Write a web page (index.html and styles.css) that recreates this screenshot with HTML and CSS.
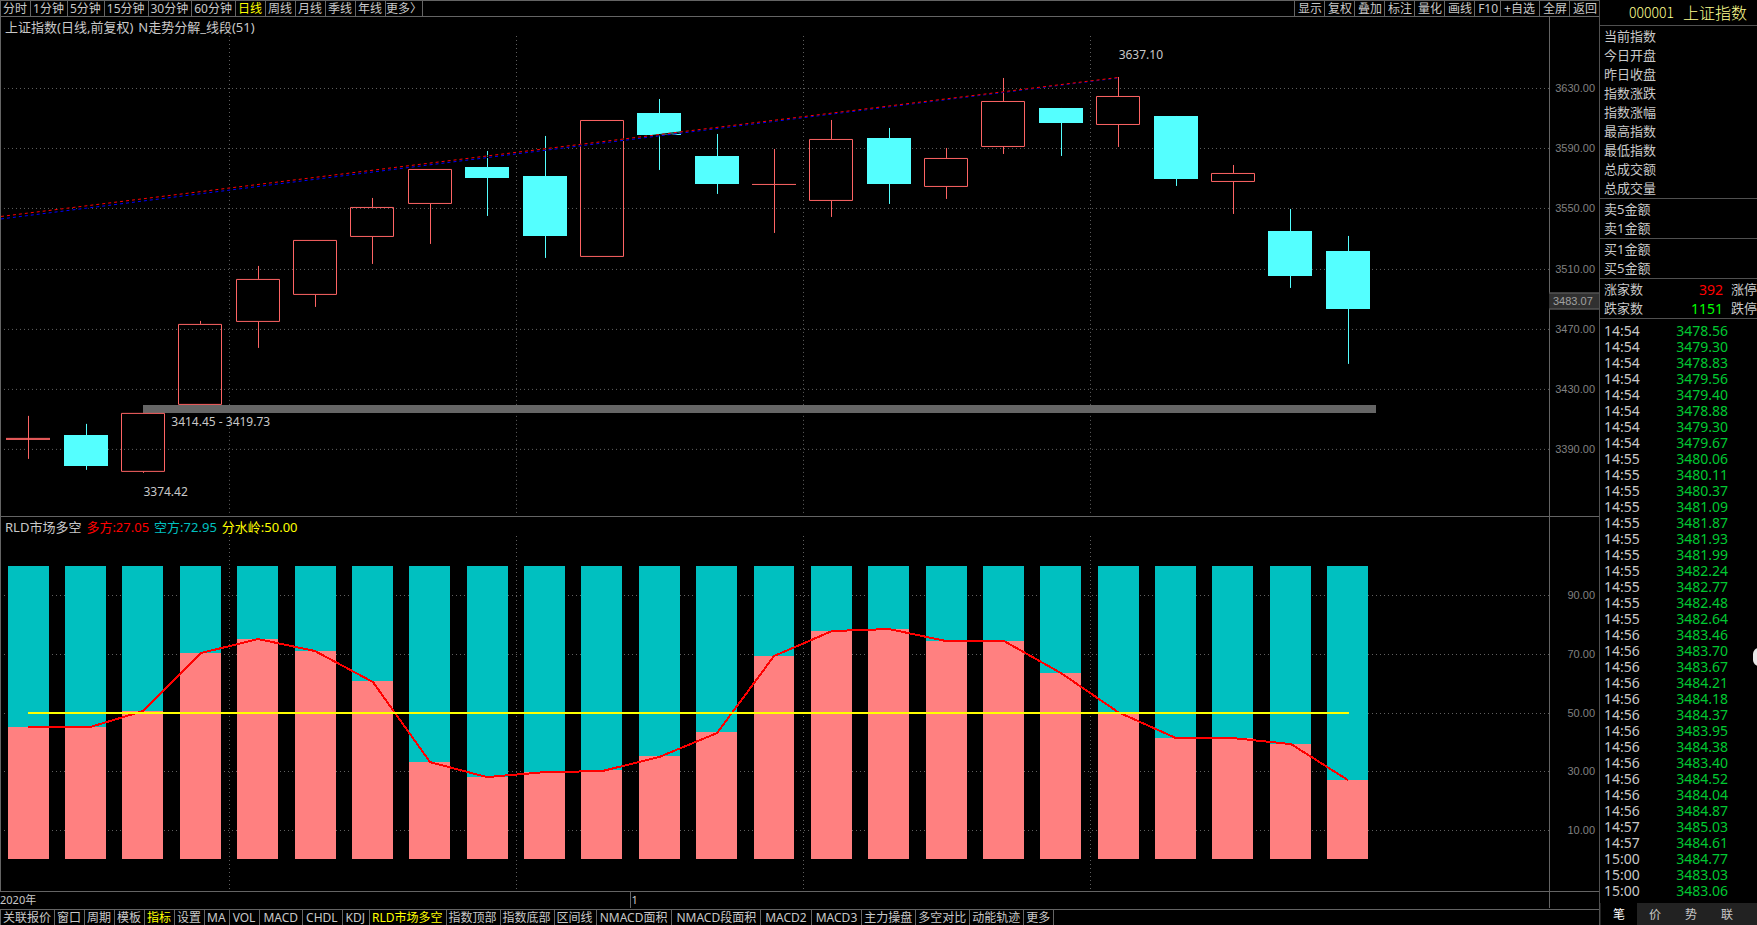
FILE: index.html
```html
<!DOCTYPE html>
<html lang="zh-CN">
<head>
<meta charset="utf-8">
<title>上证指数 000001</title>
<link rel="stylesheet" href="styles.css">
</head>
<body>
<div class="terminal">
  <main class="workspace">
    <nav class="toolbar toolbar-top">
      <div class="cells">
        <button>分时</button><button>1分钟</button><button>5分钟</button><button>15分钟</button><button>30分钟</button><button>60分钟</button><button class="active">日线</button><button>周线</button><button>月线</button><button>季线</button><button>年线</button><button class="flush">更多〉</button>
      </div>
      <div class="cells cells-right">
        <button>显示</button><button>复权</button><button>叠加</button><button>标注</button><button>量化</button><button>画线</button><button>F10</button><button class="latin">+自选</button><button>全屏</button><button>返回</button>
      </div>
    </nav>

    <section class="panel panel-price">
      <div class="plot">
        <svg viewBox="1 17 1548 499" preserveAspectRatio="none" aria-hidden="true">
          <g class="grid">
            <path d="M4 88.5H1549M4 148.5H1549M4 208.5H1549M4 269.5H1549M4 329.5H1549M4 389.5H1549M4 449.5H1549"/>
            <path d="M229.5 36V514M516.5 36V514M803.5 36V514M1090.5 36V514"/>
          </g>
          <rect class="band" x="143" y="405" width="1233" height="8"/>
          <path class="up" d="M28.5 416V459M143.5 472V473M200.5 321V324M258.5 266V279M258.5 322V348M315.5 295V307M372.5 198V207M372.5 237V264M430.5 204V244M774.5 149V233M831.5 120V139M831.5 201V217M946.5 148V158M946.5 187V199M1003.5 78V101M1003.5 147V154M1118.5 77V96M1118.5 125V147M1233.5 165V173M1233.5 182V214"/>
          <path class="up" d="M6 438.5H50M6 439.5H50M752 184.5H796"/>
          <path class="up" d="M121.5 413.5h43v58h-43zM178.5 324.5h43v80h-43zM236.5 279.5h43v42h-43zM293.5 240.5h43v54h-43zM350.5 207.5h43v29h-43zM408.5 169.5h43v34h-43zM580.5 120.5h43v136h-43zM809.5 139.5h43v61h-43zM924.5 158.5h43v28h-43zM981.5 101.5h43v45h-43zM1096.5 96.5h43v28h-43zM1211.5 173.5h43v8h-43z"/>
          <path class="down-wick" d="M86.5 424V470M487.5 151V216M545.5 136V258M659.5 99V170M717.5 134V194M889.5 128V204M1061.5 108V156M1176.5 116V186M1290.5 209V288M1348.5 236V364"/>
          <path class="down" d="M64 435h44v31h-44zM465 167h44v11h-44zM523 176h44v60h-44zM637 113h44v22h-44zM695 156h44v28h-44zM867 138h44v46h-44zM1039 108h44v15h-44zM1154 116h44v63h-44zM1268 231h44v45h-44zM1326 251h44v58h-44z"/>
          <path class="trend-gap" d="M1 219L1118 78"/>
          <path class="trend-blue" d="M1 219L1118 78"/>
          <path class="trend-gap" d="M1 216.5L1118 77.5"/>
          <path class="trend-red" d="M1 216.5L1118 77.5"/>
        </svg>
        <h2 class="caption"><span>上证指数(日线,前复权)</span> <span>N走势分解_线段(51)</span></h2>
        <span class="note" style="left:72.2%;top:7.6%">3637.10</span>
        <span class="note" style="left:11%;top:81.1%">3414.45 - 3419.73</span>
        <span class="note" style="left:9.2%;top:95.2%">3374.42</span>
      </div>
      <div class="axis">
        <span style="top:14.2%">3630.00</span>
        <span style="top:26.3%">3590.00</span>
        <span style="top:38.3%">3550.00</span>
        <span style="top:50.5%">3510.00</span>
        <span class="last-price" style="top:57%">3483.07</span>
        <span style="top:62.5%">3470.00</span>
        <span style="top:74.5%">3430.00</span>
        <span style="top:86.6%">3390.00</span>
      </div>
    </section>

    <section class="panel panel-rld">
      <div class="plot">
        <svg viewBox="1 517 1548 374" preserveAspectRatio="none" aria-hidden="true">
          <g class="grid">
            <path d="M4 595.5H1549M4 654.5H1549M4 713.5H1549M4 771.5H1549M4 830.5H1549"/>
            <path d="M229.5 536V890M516.5 536V890M803.5 536V890M1090.5 536V890"/>
          </g>
          <path class="bear" d="M8 566h41v293h-41zM65 566h41v293h-41zM122 566h41v293h-41zM180 566h41v293h-41zM237 566h41v293h-41zM295 566h41v293h-41zM352 566h41v293h-41zM409 566h41v293h-41zM467 566h41v293h-41zM524 566h41v293h-41zM581 566h41v293h-41zM639 566h41v293h-41zM696 566h41v293h-41zM754 566h40v293h-40zM811 566h41v293h-41zM868 566h41v293h-41zM926 566h41v293h-41zM983 566h41v293h-41zM1040 566h41v293h-41zM1098 566h41v293h-41zM1155 566h41v293h-41zM1212 566h41v293h-41zM1270 566h41v293h-41zM1327 566h41v293h-41z"/>
          <path class="bull" d="M8 727h41V859h-41zM65 727h41V859h-41zM122 711h41V859h-41zM180 653h41V859h-41zM237 639h41V859h-41zM295 651h41V859h-41zM352 681h41V859h-41zM409 762h41V859h-41zM467 777h41V859h-41zM524 772h41V859h-41zM581 770h41V859h-41zM639 756h41V859h-41zM696 732h41V859h-41zM754 656h40V859h-40zM811 631h41V859h-41zM868 629h41V859h-41zM926 641h41V859h-41zM983 641h41V859h-41zM1040 673h41V859h-41zM1098 713h41V859h-41zM1155 738h41V859h-41zM1212 738h41V859h-41zM1270 744h41V859h-41zM1327 780h41V859h-41z"/>
          <polyline class="bull-line" points="28,727 90,727 143,711 201,653 258,639 315,651 373,682 430,762 487,777 545,772 602,771 659,757 717,733 774,656 832,631 889,629 946,641 1004,641 1061,673 1118,712 1176,738 1233,738 1291,744 1348,780"/>
          <path class="midline" d="M28 713H1349"/>
        </svg>
        <h2 class="caption"><span>RLD市场多空</span> <span class="c-red">多方:27.05</span> <span class="c-teal">空方:72.95</span> <span class="c-yellow">分水岭:50.00</span></h2>
      </div>
      <div class="axis">
        <span style="top:20.9%">90.00</span>
        <span style="top:36.6%">70.00</span>
        <span style="top:52.4%">50.00</span>
        <span style="top:67.9%">30.00</span>
        <span style="top:83.7%">10.00</span>
      </div>
    </section>

    <div class="dates">
      <div class="dates-scale"><span>2020年</span><span class="month" style="left:40.7%">1</span></div>
    </div>

    <nav class="toolbar toolbar-bottom">
      <div class="cells">
        <button>关联报价</button><button>窗口</button><button>周期</button><button>模板</button><button class="active">指标</button><button>设置</button><button>MA</button><button class="latin">VOL</button><button class="latin">MACD</button><button class="latin">CHDL</button><button class="latin">KDJ</button><button class="active">RLD市场多空</button><button>指数顶部</button><button>指数底部</button><button>区间线</button><button class="latin">NMACD面积</button><button class="wide">NMACD段面积</button><button class="wide">MACD2</button><button class="wide">MACD3</button><button>主力操盘</button><button>多空对比</button><button>动能轨迹</button><button>更多</button>
      </div>
    </nav>
  </main>

  <aside class="quote">
    <h1 class="quote-head"><span>000001</span>上证指数</h1>
    <div class="group">
      <div class="row">当前指数</div><div class="row">今日开盘</div><div class="row">昨日收盘</div><div class="row">指数涨跌</div><div class="row">指数涨幅</div><div class="row">最高指数</div><div class="row">最低指数</div><div class="row">总成交额</div><div class="row">总成交量</div>
    </div>
    <div class="group"><div class="row">卖5金额</div><div class="row">卖1金额</div></div>
    <div class="group"><div class="row">买1金额</div><div class="row">买5金额</div></div>
    <div class="group">
      <div class="row"><span>涨家数</span><span class="count c-red">392</span><span>涨停</span></div>
      <div class="row"><span>跌家数</span><span class="count c-lime">1151</span><span>跌停</span></div>
    </div>
    <div class="ticks">
      <table>
        <tbody>
          <tr><td>14:54</td><td>3478.56</td></tr>
          <tr><td>14:54</td><td>3479.30</td></tr>
          <tr><td>14:54</td><td>3478.83</td></tr>
          <tr><td>14:54</td><td>3479.56</td></tr>
          <tr><td>14:54</td><td>3479.40</td></tr>
          <tr><td>14:54</td><td>3478.88</td></tr>
          <tr><td>14:54</td><td>3479.30</td></tr>
          <tr><td>14:54</td><td>3479.67</td></tr>
          <tr><td>14:55</td><td>3480.06</td></tr>
          <tr><td>14:55</td><td>3480.11</td></tr>
          <tr><td>14:55</td><td>3480.37</td></tr>
          <tr><td>14:55</td><td>3481.09</td></tr>
          <tr><td>14:55</td><td>3481.87</td></tr>
          <tr><td>14:55</td><td>3481.93</td></tr>
          <tr><td>14:55</td><td>3481.99</td></tr>
          <tr><td>14:55</td><td>3482.24</td></tr>
          <tr><td>14:55</td><td>3482.77</td></tr>
          <tr><td>14:55</td><td>3482.48</td></tr>
          <tr><td>14:55</td><td>3482.64</td></tr>
          <tr><td>14:56</td><td>3483.46</td></tr>
          <tr><td>14:56</td><td>3483.70</td></tr>
          <tr><td>14:56</td><td>3483.67</td></tr>
          <tr><td>14:56</td><td>3484.21</td></tr>
          <tr><td>14:56</td><td>3484.18</td></tr>
          <tr><td>14:56</td><td>3484.37</td></tr>
          <tr><td>14:56</td><td>3483.95</td></tr>
          <tr><td>14:56</td><td>3484.38</td></tr>
          <tr><td>14:56</td><td>3483.40</td></tr>
          <tr><td>14:56</td><td>3484.52</td></tr>
          <tr><td>14:56</td><td>3484.04</td></tr>
          <tr><td>14:56</td><td>3484.87</td></tr>
          <tr><td>14:57</td><td>3485.03</td></tr>
          <tr><td>14:57</td><td>3484.61</td></tr>
          <tr><td>15:00</td><td>3484.77</td></tr>
          <tr><td>15:00</td><td>3483.03</td></tr>
          <tr><td>15:00</td><td>3483.06</td></tr>
        </tbody>
      </table>
    </div>
    <nav class="tabs"><button class="on">笔</button><button>价</button><button>势</button><button>联</button></nav>
    <div class="handle"></div>
  </aside>
</div>
</body>
</html>
```

FILE: styles.css
```css
:root {
  --line: #646464;
  --side-line: #505050;
  --text: #c8c8c8;
}

* {
  box-sizing: border-box;
}

body {
  margin: 0;
  background: #000;
  color: var(--text);
  font-family: "Noto Sans", "Noto Sans CJK SC", sans-serif;
  font-size: 13px;
}

button {
  margin: 0;
  padding: 0;
  border: 0;
  background: none;
  color: inherit;
  font: inherit;
  white-space: nowrap;
}

h1,
h2 {
  margin: 0;
  font-weight: 400;
}

.terminal {
  display: grid;
  grid-template-columns: minmax(0, 1fr) 158px;
  min-height: 100vh;
  overflow: hidden;
}

.workspace {
  display: flex;
  flex-direction: column;
  min-width: 0;
}

/* Button strips */
.toolbar {
  display: flex;
  justify-content: space-between;
  border-left: 1px solid var(--line);
  font-size: 12px;
  line-height: 15px;
  overflow: hidden;
}

.toolbar-top {
  height: 17px;
  border-top: 1px solid var(--line);
  border-bottom: 1px solid var(--line);
}

.toolbar-bottom {
  height: 15px;
}

.cells {
  display: flex;
}

.cells button {
  padding: 0 3px 0 2px;
  border-right: 1px solid var(--line);
}

.cells .flush {
  padding: 0;
}

.cells-right button {
  padding: 0 2px 0 3px;
  border-right: 0;
  border-left: 1px solid var(--line);
}

.cells .latin {
  padding: 0 4px 0 3px;
}

.cells .wide {
  padding: 0 4px;
}

.cells .active {
  color: #ff0;
}

/* Chart panels */
.panel {
  display: flex;
  min-height: 0;
  border-left: 1px solid var(--line);
  border-bottom: 1px solid var(--line);
}

.panel-price {
  flex: 500 1 0;
}

.panel-rld {
  flex: 375 1 0;
}

.plot {
  position: relative;
  flex: 1;
  min-width: 0;
}

.plot svg {
  position: absolute;
  inset: 0;
  width: 100%;
  height: 100%;
  fill: none;
  shape-rendering: crispEdges;
}

.caption {
  position: relative;
  display: flex;
  gap: 5px;
  padding-left: 4px;
  font-size: 13px;
  line-height: 20px;
}

.note {
  position: absolute;
  font-size: 12px;
  line-height: 16px;
  transform: translateY(-50%);
}

.axis {
  position: relative;
  width: 50px;
  border-left: 1px solid var(--line);
  color: #808080;
  font-family: "Liberation Sans", sans-serif;
  font-size: 11px;
  line-height: 14px;
}

.axis span {
  position: absolute;
  right: 4px;
  transform: translateY(-50%);
}

.axis .last-price {
  left: -1px;
  right: 0;
  padding-left: 4px;
  border: solid var(--line);
  border-width: 1px 0;
  background: #303030;
  color: #a0a0a0;
  line-height: 15px;
}

.grid {
  stroke: #606060;
  stroke-dasharray: 1 3;
}

.band {
  fill: #666;
}

.up {
  stroke: #ff6464;
}

.down-wick {
  stroke: #54ffff;
}

.down {
  fill: #54ffff;
}

.trend-gap {
  stroke: #000;
}

.trend-red {
  stroke: #f00;
  stroke-dasharray: 3 3;
}

.trend-blue {
  stroke: #00f;
  stroke-dasharray: 3 3;
}

.bear {
  fill: #00c0c0;
}

.bull {
  fill: #ff8080;
}

.bull-line {
  stroke: #f00;
  stroke-width: 2;
}

.midline {
  stroke: #ff0;
  stroke-width: 2;
}

.c-red {
  color: #f00;
}

.c-teal {
  color: #00c0c0;
}

.c-yellow {
  color: #ff0;
}

.c-lime {
  color: #0f0;
}

/* Date scale */
.dates {
  height: 18px;
  padding-right: 49px;
  border-bottom: 1px solid var(--line);
  font-size: 11px;
  line-height: 16px;
}

.dates-scale {
  position: relative;
  height: 16px;
  border-right: 1px solid var(--line);
}

.month {
  position: absolute;
  top: 0;
  border-left: 1px solid var(--line);
}

/* Quote sidebar */
.quote {
  position: relative;
  display: flex;
  flex-direction: column;
  min-width: 0;
  border-left: 1px solid var(--side-line);
  overflow: hidden;
}

.quote-head {
  display: flex;
  justify-content: flex-end;
  align-items: center;
  gap: 9px;
  height: 25px;
  padding: 0 10px 2px 0;
  color: #ffff90;
  font-family: "Noto Sans CJK SC", sans-serif;
  font-size: 16px;
  font-weight: 300;
}

.quote-head span {
  font-size: 14px;
}

.group {
  padding: 1px 0 0 4px;
  border-top: 1px solid var(--side-line);
}

.row {
  display: flex;
  height: 19px;
  line-height: 19px;
  white-space: nowrap;
}

.row .count {
  width: 82px;
  margin-right: 8px;
  font-size: 14px;
  text-align: right;
}

.ticks {
  flex: 1;
  padding: 4px 0 4px 4px;
  border-top: 1px solid var(--side-line);
}

table {
  width: 124px;
  border-collapse: collapse;
  font-size: 14px;
  line-height: 16px;
}

td {
  padding: 0;
}

td + td {
  color: #00c832;
  text-align: right;
}

.tabs {
  display: flex;
  height: 22px;
  padding-left: 1px;
  background: #222;
  font-size: 12px;
}

.tabs button {
  width: 36px;
}

.tabs .on {
  background: #000;
  color: #fff;
}

.handle {
  position: absolute;
  top: 70%;
  right: -8px;
  width: 12px;
  height: 18px;
  border-radius: 6px;
  background: #e8e8e8;
}
```
